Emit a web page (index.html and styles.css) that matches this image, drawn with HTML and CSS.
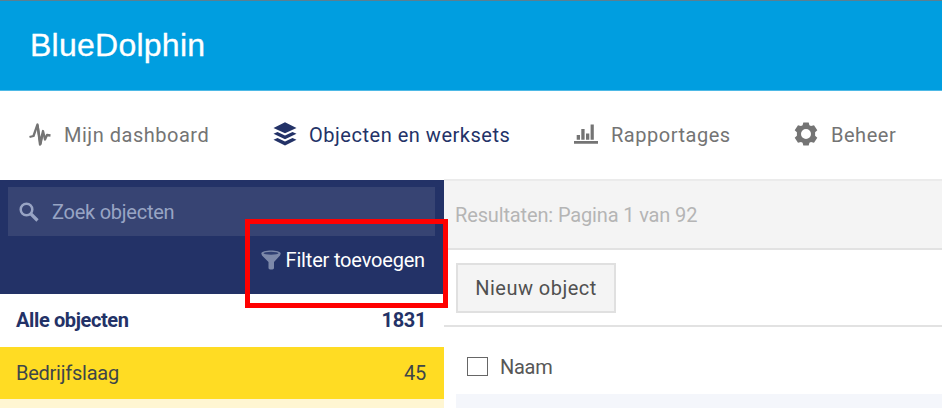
FILE: index.html
```html
<!DOCTYPE html>
<html lang="nl">
<head>
    <meta charset="UTF-8">
    <meta name="viewport" content="width=device-width, initial-scale=1.0">
    <title>BlueDolphin</title>
    <link rel="stylesheet" href="styles.css">
</head>
<body>
    <header class="header">
        <h1 class="logo">BlueDolphin</h1>
    </header>

    <nav class="nav">
        <a class="nav-item dashboard">
            <svg width="24" height="24" viewBox="0 0 24 24" fill="none" stroke="currentColor" stroke-width="2.3" stroke-linejoin="round">
                <path d="M1.500 15L5.500 14L9.500 2.500L12 22.500L15 9L17 17.500L19 13L22.500 13.500"/>
                <path d="M9.500 3.500L12.500 22L14.500 12"/>
            </svg>
            <span>Mijn dashboard</span>
        </a>
        <a class="nav-item objects active">
            <svg width="24" height="24" viewBox="0 0 24 24" fill="currentColor">
                <path d="M12 .3L23.500 6L12 11.300L.5 6Z"/>
                <path d="M.5 11.700L4.500 10L12 13.500L19.500 10L23.500 11.700L12 17.200Z"/>
                <path d="M.5 17.800L4.500 16L12 19.500L19.500 16L23.500 17.800L12 23.400Z"/>
            </svg>
            <span>Objecten en werksets</span>
        </a>
        <a class="nav-item reports">
            <svg width="24" height="24" viewBox="0 0 24 24" fill="currentColor">
                <path d="M0 19h24v2.700H0zM2.700 13h3.300v4.800H2.700zM7.300 7h3.300v10.800H7.300zM12 11.500h3.300v6.300H12zM16.600 2.500h3.200v15.300h-3.200z"/>
            </svg>
            <span>Rapportages</span>
        </a>
        <a class="nav-item admin">
            <svg width="24" height="24" viewBox="0 0 24 24" fill="currentColor">
                <path fill-rule="evenodd" d="M9.300 .5h5.400l.7 2.700 1.600.9 3-.9 3.300 5-2.200 2v3.600l2.200 2-3.300 5-3-.9-1.600.9-.7 2.700H9.300l-.7-2.700-1.600-.9-3 .9-3.300-5 2.200-2v-3.600l-2.200-2 3.300-5 3 .9 1.600-.9zM12 7a5 5 0 1 0 0 10a5 5 0 1 0 0-10z"/>
            </svg>
            <span>Beheer</span>
        </a>
    </nav>

    <div class="content">
        <aside class="sidebar">
            <div class="search-panel">
                <div class="search">
                    <svg width="20" height="20" viewBox="0 0 20 20" fill="none" stroke="currentColor">
                        <circle cx="7.500" cy="7.500" r="5.800" stroke-width="2.500"/>
                        <path d="M12 12L18.500 18.500" stroke-width="3.200"/>
                    </svg>
                    <span>Zoek objecten</span>
                </div>
                <div class="filter">
                    <svg width="20" height="20" viewBox="0 0 20 20">
                        <path fill="#7d89aa" d="M.3 3.500C.3-.4 19.700-.4 19.700 3.500L19 5.500 13 12v6c0 2-5.500 2-5.500 0v-6L1 5.500z"/>
                        <ellipse cx="10" cy="3.300" rx="7.500" ry="1.500" fill="#314073"/>
                    </svg>
                    <span>Filter toevoegen</span>
                    <div class="highlight"></div>
                </div>
            </div>
            <div class="row total"><span>Alle objecten</span><span class="count">1831</span></div>
            <div class="row layer"><span>Bedrijfslaag</span><span class="count">45</span></div>
            <div class="row-next"></div>
        </aside>

        <main class="main">
            <div class="results"><span>Resultaten: Pagina 1 van 92</span></div>
            <div class="toolbar"><button class="new-btn">Nieuw object</button></div>
            <div class="table-head">
                <span class="checkbox"></span>
                <span class="name">Naam</span>
            </div>
            <div class="table-row"></div>
        </main>
    </div>
</body>
</html>
```
FILE: styles.css
```css
* {
    box-sizing: border-box;
    margin: 0;
    padding: 0;
}

body {
    height: 408px;
    overflow: hidden;
    background: #ffffff;
    font-family: Roboto, sans-serif;
    font-size: 20px;
}

svg {
    display: block;
    flex-shrink: 0;
}

span {
    white-space: nowrap;
}

.header {
    height: 91px;
    padding: 26px 0 0 30px;
    background: #009ee0;
    border-top: 1px solid #5b7f91;
    border-bottom: 1px solid #4db9e6;
}

.logo {
    color: #ffffff;
    font-family: "Liberation Sans", Arial, sans-serif;
    font-size: 32px;
    font-weight: 400;
    line-height: 36px;
    letter-spacing: 0.25px;
    -webkit-text-stroke: 0.3px #ffffff;
}

.nav {
    display: flex;
    height: 88px;
    padding-left: 28px;
}

.nav-item {
    display: flex;
    align-items: center;
    gap: 12px;
    height: 88px;
    color: #747474;
    letter-spacing: 0.52px;
}

.nav-item svg {
    margin-top: -2px;
}

.dashboard {
    width: 245px;
}

.objects {
    width: 301px;
}

.reports {
    width: 220px;
}

.reports,
.admin {
    gap: 13px;
}

.active {
    color: #233267;
}

.content {
    display: flex;
    height: 229px;
}

.sidebar {
    width: 444px;
    color: #233267;
}

.search-panel {
    height: 114px;
    margin-top: 1px;
    padding: 7px 9px 0 8px;
    background: #233267;
}

.search {
    display: flex;
    align-items: center;
    gap: 13px;
    height: 49px;
    padding-left: 11px;
    background: #374473;
    color: #98a4c4;
    letter-spacing: -0.25px;
}

.filter {
    display: flex;
    position: relative;
    align-items: center;
    justify-content: flex-end;
    gap: 5px;
    height: 48px;
    padding-right: 10px;
    color: #ffffff;
    letter-spacing: -0.18px;
}

/* red frame over the filter link */
.highlight {
    position: absolute;
    top: -17px;
    right: -13px;
    width: 203px;
    height: 89px;
    border: 5px solid #ff0000;
    z-index: 2;
}

.row {
    display: flex;
    align-items: center;
    justify-content: space-between;
    height: 52px;
    padding: 0 18px 0 16px;
    letter-spacing: -0.25px;
}

.total {
    height: 53px;
    padding-bottom: 1px;
    font-weight: 700;
    letter-spacing: -0.38px;
}

.layer {
    background: #ffdc23;
    color: #3e4649;
}

.row-next {
    height: 10px;
    background: #fff6d2;
}

.main {
    flex: 1;
    color: #575757;
}

.results {
    height: 71px;
    padding: 22px 0 0 11px;
    background: #f4f4f4;
    border-top: 2px solid #ebebeb;
    border-bottom: 2px solid #e2e2e2;
    color: #b5b5b5;
    line-height: 24px;
    letter-spacing: -0.14px;
}

.toolbar {
    height: 77px;
    padding: 13px 0 0 12px;
    border-bottom: 2px solid #e2e2e2;
}

.new-btn {
    width: 160px;
    height: 50px;
    background: #f4f4f4;
    border: 2px solid #e0e0e0;
    color: #505050;
    font-family: inherit;
    font-size: 20px;
    letter-spacing: 0.48px;
}

.table-head {
    display: flex;
    align-items: center;
    gap: 12px;
    height: 67px;
    padding: 12px 0 0 23px;
}

.checkbox {
    width: 21px;
    height: 19px;
    border: 1.500px solid #666666;
}

.name {
    letter-spacing: -0.3px;
}

.table-row {
    height: 14px;
    margin-left: 12px;
    background: #f4f6fb;
}
```
